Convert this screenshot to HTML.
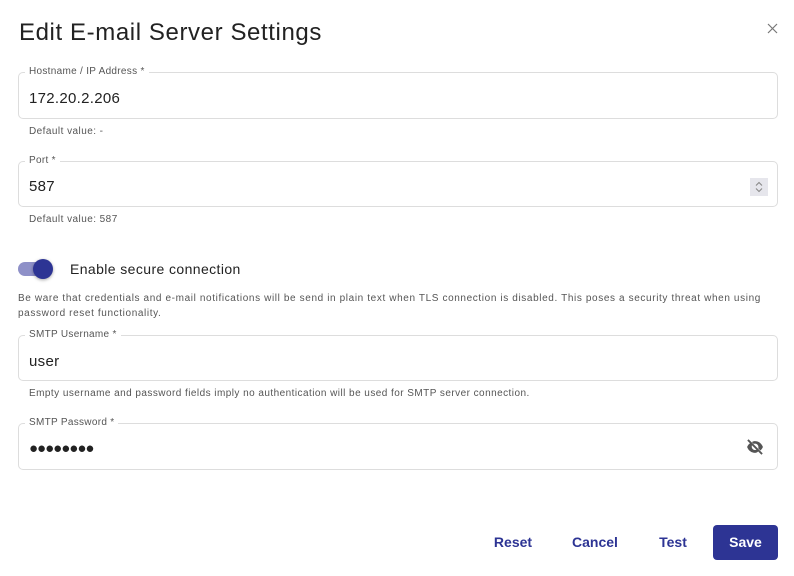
<!DOCTYPE html>
<html><head><style>
body{margin:0;width:794px;height:576px;background:#fff;font-family:"Liberation Sans",sans-serif;color:#222;position:relative;overflow:hidden}
.a{position:absolute}
.f{position:absolute;left:18px;width:758px;border:1px solid #ddd;border-radius:5px}
.lab{position:absolute;left:6px;top:-7px;background:#fff;padding:0 4px;font-size:10px;color:#555;line-height:12px;letter-spacing:.3px}
.val{position:absolute;left:10px;font-size:15px;color:#222;letter-spacing:.3px}
.help{position:absolute;left:29px;font-size:10px;color:#555;letter-spacing:.45px}
.btn{position:absolute;top:525px;height:35px;line-height:35px;font-size:14px;font-weight:bold;color:#2d3494;text-align:center}
</style></head><body>
<div class="a" style="left:19px;top:19px;font-size:24px;color:#222;letter-spacing:.6px">Edit E-mail Server Settings</div>
<svg class="a" style="left:767px;top:23px" width="11" height="11" viewBox="0 0 11 11"><path d="M1 1L10 10M10 1L1 10" stroke="#777" stroke-width="1.2"/></svg>

<div class="f" style="top:72px;height:45px"><span class="lab">Hostname / IP Address *</span><span class="val" style="top:17px">172.20.2.206</span></div>
<div class="help" style="top:126px">Default value: -</div>

<div class="f" style="top:161px;height:44px"><span class="lab">Port *</span><span class="val" style="top:16px">587</span>
<div class="a" style="left:731px;top:16px;width:18px;height:18px;background:#e6e6ec"><svg width="18" height="18" viewBox="0 0 18 18"><path d="M6 7.5L9 4.5L12 7.5M6 10.5L9 13.5L12 10.5" fill="none" stroke="#888" stroke-width="1.1"/></svg></div></div>
<div class="help" style="top:214px">Default value: 587</div>

<div class="a" style="left:18px;top:262px;width:34px;height:14px;border-radius:7px;background:#8e90c8"></div>
<div class="a" style="left:33px;top:259px;width:20px;height:20px;border-radius:50%;background:#2d3494;box-shadow:0 1px 3px rgba(0,0,0,.35)"></div>
<div class="a" style="left:70px;top:261px;font-size:14px;color:#222;letter-spacing:.4px">Enable secure connection</div>
<div class="a" style="left:18px;top:291px;width:770px;font-size:10px;color:#555;line-height:15px;letter-spacing:.62px;white-space:nowrap">Be ware that credentials and e-mail notifications will be send in plain text when TLS connection is disabled. This poses a security threat when using<br>password reset functionality.</div>

<div class="f" style="top:335px;height:44px"><span class="lab">SMTP Username *</span><span class="val" style="top:17px">user</span></div>
<div class="help" style="top:388px">Empty username and password fields imply no authentication will be used for SMTP server connection.</div>

<div class="f" style="top:423px;height:45px"><span class="lab">SMTP Password *</span><span class="val" style="top:16px;font-size:15px;letter-spacing:-1px">●●●●●●●●</span>
<svg class="a" style="left:725px;top:13px" width="22" height="20" viewBox="0 0 24 24"><path fill="#555" d="M12 5c4.2 0 7.8 2.6 9.5 7-.7 1.7-1.7 3.1-3 4.2L15.9 13.6c.1-.5.2-1 .2-1.6 0-2.3-1.8-4.1-4.1-4.1-.6 0-1.1.1-1.6.3L8.3 6.1C9.5 5.4 10.7 5 12 5zM2.5 12c.8-2 2.1-3.6 3.7-4.7l2.3 2.3c-.3.6-.4 1.2-.4 1.9 0 2.3 1.8 4.1 4.1 4.1.7 0 1.3-.1 1.9-.4l1.9 1.9C14.8 18.6 13.4 19 12 19c-4.2 0-7.8-2.6-9.5-7z"/><path stroke="#555" stroke-width="2.2" d="M3.5 3.5l17 17"/></svg></div>

<div class="btn" style="left:490px;width:46px">Reset</div>
<div class="btn" style="left:568px;width:54px">Cancel</div>
<div class="btn" style="left:655px;width:36px">Test</div>
<div class="btn" style="left:713px;width:65px;background:#2d3494;color:#fff;border-radius:4px">Save</div>
</body></html>
